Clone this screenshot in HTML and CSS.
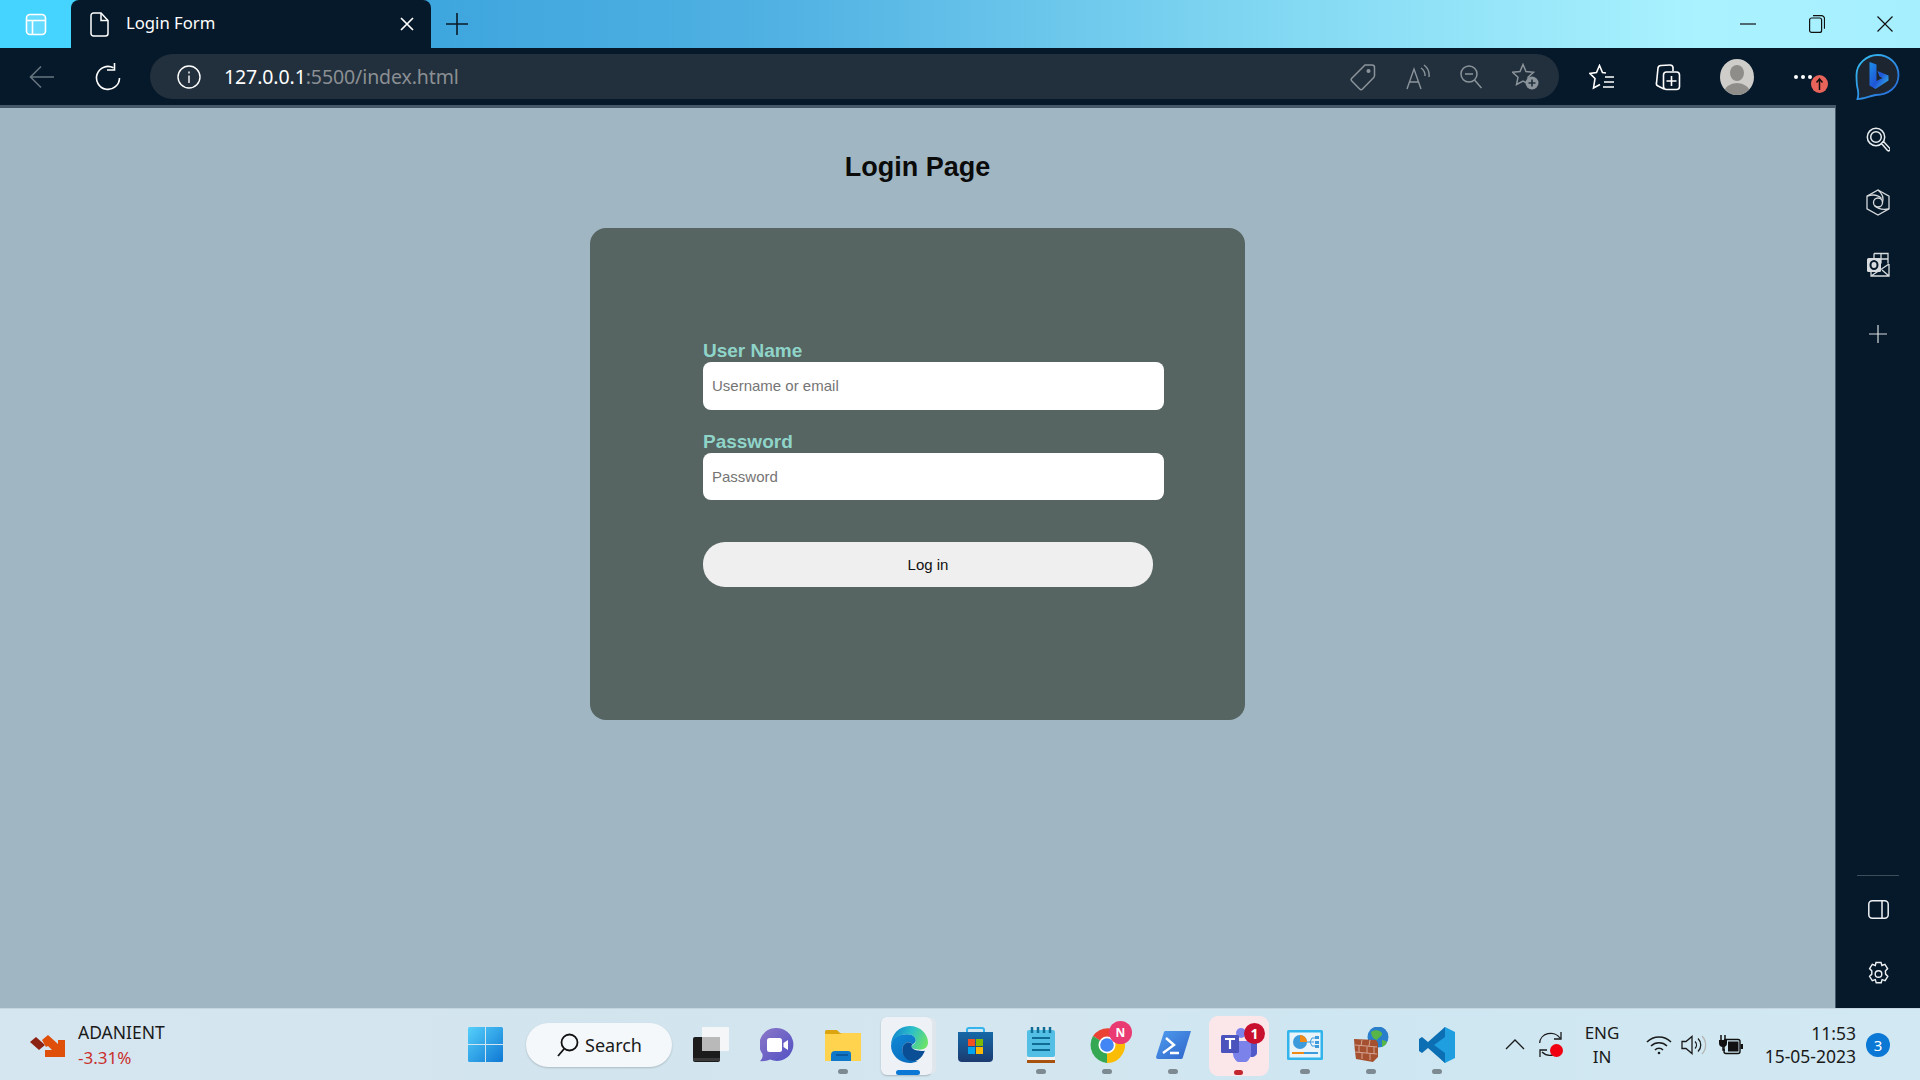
FILE: index.html
```html
<!DOCTYPE html>
<html lang="en">
<head>
<meta charset="utf-8">
<title>Login Form</title>
<link rel="stylesheet" href="styles.css">
</head>
<body>
<div class="screen">
  <header class="titlebar">
    <div class="tabstrip-btn">
      <svg width="22" height="23" viewBox="0 0 22 23" fill="none" stroke="#fff" stroke-width="1.6"><rect x="1.5" y="1.5" width="19" height="20" rx="3.5" fill="#ffffff" fill-opacity=".18"/><path d="M1.5 7.5h19M7.5 7.5v14"/></svg>
    </div>
    <div class="tab">
      <svg class="tab-page" width="19" height="25" viewBox="0 0 19 25" fill="none" stroke="#fff" stroke-width="1.5"><path d="M3.5 1h7.5l7 7.5v13a2.500 2.500 0 0 1-2.500 2.500h-12a2.500 2.500 0 0 1-2.500-2.500v-18a2.500 2.500 0 0 1 2.500-2.500z"/><path d="M11 1v7.500h7"/></svg>
      <span class="tab-title">Login Form</span>
      <svg class="tab-close" width="14" height="14" viewBox="0 0 14 14" stroke="#fff" stroke-width="1.7"><path d="M1 1l12 12M13 1L1 13"/></svg>
    </div>
    <svg class="newtab" width="22" height="22" viewBox="0 0 22 22" stroke="#0a1a26" stroke-width="1.6"><path d="M11 0v22M0 11h22"/></svg>
    <div class="winctl">
      <svg width="16" height="16" viewBox="0 0 16 16" stroke="#111" stroke-width="1.2"><path d="M0 8h16"/></svg>
      <svg width="16" height="18" viewBox="0 0 16 18" fill="none" stroke="#111" stroke-width="1.2"><rect x=".6" y="3" width="12" height="14.400" rx="2"/><path d="M4 .7h8.500a3 3 0 0 1 3 3v10"/></svg>
      <svg width="16" height="16" viewBox="0 0 16 16" stroke="#111" stroke-width="1.2"><path d="M.5.500l15 15M15.500.500l-15 15"/></svg>
    </div>
  </header>

  <nav class="toolbar">
    <svg class="nav-back" width="26" height="24" viewBox="0 0 26 24" fill="none" stroke="#66747f" stroke-width="1.6"><path d="M25 12H1.500M12 1.500L1.500 12 12 22.500"/></svg>
    <svg class="nav-reload" width="26" height="28" viewBox="0 0 26 28" fill="none" stroke="#fff" stroke-width="1.6"><path d="M18.500 4.800A11.500 11.500 0 1 0 24.500 15"/><path d="M19.500 0v7h-7.500"/></svg>
    <div class="urlbar">
      <svg class="url-info" width="24" height="24" viewBox="0 0 24 24" fill="none" stroke="#fff" stroke-width="1.4"><circle cx="12" cy="12" r="11"/><path d="M12 10.500v7.500M12 6.500v2"/></svg>
      <div class="url-text"><span class="url-host">127.0.0.1</span><span class="url-rest">:5500/index.html</span></div>
      <div class="url-actions">
        <svg width="26" height="28" viewBox="0 0 26 28" fill="none" stroke="#8b949b" stroke-width="1.5"><path d="M15 2h7a2.500 2.500 0 0 1 2.500 2.500v8a3 3 0 0 1-1 2.200L12.500 26a2 2 0 0 1-2.800 0L1.800 18a2 2 0 0 1 0-2.800z"/><circle cx="18.500" cy="8" r="1.300" fill="#8b949b"/></svg>
        <svg width="24" height="26" viewBox="0 0 24 26" fill="none" stroke="#8b949b" stroke-width="1.4"><path d="M1 25L8 5l7 20M3.500 18h9M15 4a9 9 0 0 1 4 8M18 1a13 13 0 0 1 5 12"/></svg>
        <svg width="22" height="24" viewBox="0 0 22 24" fill="none" stroke="#8b949b" stroke-width="1.5"><circle cx="9" cy="9" r="8"/><path d="M5 9h8M14.500 15l7 8"/></svg>
        <svg width="27" height="27" viewBox="0 0 27 27" fill="none" stroke="#8b949b" stroke-width="1.5"><path d="M11 1.500L14 8.500 21.500 9.300 16 14.300 17.500 21.500 11 18 4.500 21.500 6 14.300 .5 9.300 8 8.500Z"/><circle cx="20" cy="20" r="6.500" fill="#8b949b" stroke="none"/><path d="M20 16.500v7M16.500 20h7" stroke="#22303d" stroke-width="1.600"/></svg>
      </div>
    </div>
    <svg class="tb-fav" width="26" height="26" viewBox="0 0 26 26" fill="none" stroke="#fff" stroke-width="1.600"><path d="M17 9L13.500 8.500 10.500 1.500 7.500 8.500 1 9.500 6 14.500 4.500 24 11 20.500"/><path d="M16 13h9M15 18h10M14 23h11"/></svg>
    <svg class="tb-coll" width="26" height="28" viewBox="0 0 26 28" fill="none" stroke="#fff" stroke-width="1.600"><path d="M9 26L3 23a2.500 2.500 0 0 1-1.500-3L3 5a3 3 0 0 1 3-2.500L15 2a3 3 0 0 1 3 2.500V8"/><rect x="8.500" y="9" width="16" height="17.500" rx="3" fill="#06192a"/><path d="M16.500 13v10M11.500 18h10"/></svg>
    <svg class="tb-user" width="34" height="36" viewBox="0 0 34 36"><defs><clipPath id="uc"><ellipse cx="17" cy="18" rx="17" ry="18"/></clipPath></defs><ellipse cx="17" cy="18" rx="17" ry="18" fill="#cfcdc9"/><g clip-path="url(#uc)" fill="#8f8d8a"><ellipse cx="17" cy="14" rx="7" ry="8"/><ellipse cx="17" cy="34" rx="13" ry="10"/></g></svg>
    <div class="tb-more">
      <svg width="20" height="6" viewBox="0 0 20 6" fill="#fff"><circle cx="3" cy="3" r="2"/><circle cx="10" cy="3" r="2"/><circle cx="17" cy="3" r="2"/></svg>
      <svg class="tb-more-badge" width="17" height="18" viewBox="0 0 17 18"><ellipse cx="8.500" cy="9" rx="8.500" ry="9" fill="#e8635a"/><path d="M8.500 15V4.500M5.500 7.500l3-3.500 3 3.500" stroke="#111" stroke-width="1.500" fill="none"/></svg>
    </div>
    <svg class="tb-bing" width="45" height="46" viewBox="0 0 44 46"><defs><linearGradient id="bb" x1="0" y1="0" x2="1" y2="1"><stop offset="0" stop-color="#36c1f2"/><stop offset="1" stop-color="#2563d8"/></linearGradient><linearGradient id="bf" x1="0" y1="0" x2="1" y2="1"><stop offset="0" stop-color="#1d8fe8"/><stop offset=".55" stop-color="#1f55d6"/><stop offset="1" stop-color="#37c2e8"/></linearGradient></defs><path d="M22 1C33 1 43 9 43 21C43 33 33 41 20 41C14 42 8 45 2 45C3 42 3 38 2 34C1 30 1 26 1 21C1 10 11 1 22 1Z" fill="#1c2530" stroke="url(#bb)" stroke-width="1.800"/><path d="M14 8l7 2.500V27l6-3-3-1.500-2-5.500 11 4.500v5L20 35l-6-3.500z" fill="url(#bf)"/></svg>
  </nav>

  <div class="body-row">
    <main class="page">
      <h1 class="page-title">Login Page</h1>
      <form class="card">
        <label class="field-label" for="user">User Name</label>
        <input class="field field-user" id="user" type="text" placeholder="Username or email">
        <label class="field-label field-label-pw" for="pw">Password</label>
        <input class="field field-pw" id="pw" type="password" placeholder="Password">
        <button class="login" type="button">Log in</button>
      </form>
    </main>
    <aside class="sidebar">
      <div class="side-top">
        <svg width="24" height="26" viewBox="0 0 24 26" fill="none" stroke="#e8ecef" stroke-width="1.500"><circle cx="10" cy="10" r="8.700"/><circle cx="10" cy="10" r="5.300"/><path d="M15.500 16.500l2-2 6 6.500a1.400 1.400 0 0 1-2 2.500z" fill="#06192a"/></svg>
        <svg width="24" height="27" viewBox="0 0 24 27" fill="none" stroke="#d5d9dc" stroke-width="1.300"><path d="M12 1l11 6.200v12.600L12 26 1 19.800V7.200z"/><path d="M12 1C17 5 17.500 10 16.500 13.500M23 19.800C17 21 12 20 8.500 16.500M1 7.200C7 5 12 6 15.500 9.500"/><circle cx="12" cy="13.500" r="4.500"/></svg>
        <svg width="24" height="25" viewBox="0 0 24 25"><path d="M8 1.500h14v10M8 1.500v5M15 1.500v10M8 7h14" fill="none" stroke="#d9dcde" stroke-width="1.300"/><rect x="1" y="6" width="14" height="14" rx="1.500" fill="#d9dcde"/><ellipse cx="8" cy="13" rx="3.500" ry="4" fill="none" stroke="#06192a" stroke-width="2"/><path d="M5 20v4h18V12M5 24l9-6M23 24l-7-6M14 18l9-6" fill="none" stroke="#d9dcde" stroke-width="1.300"/></svg>
        <svg class="side-plus" width="18" height="18" viewBox="0 0 18 18" stroke="#d9dcde" stroke-width="1.200"><path d="M9 0v18M0 9h18"/></svg>
      </div>
      <div class="side-bottom">
        <div class="side-sep"></div>
        <svg width="21" height="19" viewBox="0 0 21 19" fill="none" stroke="#eef1f3" stroke-width="1.500"><rect x=".8" y=".8" width="19.400" height="17.400" rx="3.500"/><path d="M14 .8v17.400"/></svg>
        <svg width="25" height="26" viewBox="0 0 25 26" fill="none" stroke="#eef1f3" stroke-width="1.400"><path d="M10 1.500h5l.9 3 3-1.100 2.700 4.200-2.200 2.300.2 3.200 2.200 2.300-2.700 4.200-3-1-.9 3.100h-5l-.9-3.100-3 1-2.700-4.200 2.200-2.300-.0-3.200-2.200-2.300 2.700-4.200 3 1.100z"/><circle cx="12.500" cy="13" r="3.300"/></svg>
      </div>
    </aside>
  </div>

  <footer class="taskbar">
    <div class="widget">
      <svg width="36" height="24" viewBox="0 0 36 24"><path d="M0 9l6-5 9 8-6 5z" fill="#8c2214"/><path d="M12 7l6-5 10 9V7l7 0v17H15l0-7h7l-4-4-2 1z" fill="#df4f0a"/></svg>
      <div class="widget-text"><div class="widget-name">ADANIENT</div><div class="widget-val">-3.31%</div></div>
    </div>
    <div class="start">
      <svg width="35" height="35" viewBox="0 0 35 35"><defs><linearGradient id="w1" x1="0" y1="0" x2="1" y2="1"><stop offset="0" stop-color="#55d0fb"/><stop offset="1" stop-color="#0f78d4"/></linearGradient></defs><path d="M1.500 0H17v17H0V1.500A1.500 1.500 0 0 1 1.500 0zM18 0h15.500A1.500 1.500 0 0 1 35 1.500V17H18zM0 18h17v17H1.500A1.500 1.500 0 0 1 0 33.500zM18 18h17v15.500a1.500 1.500 0 0 1-1.500 1.500H18z" fill="url(#w1)"/></svg>
    </div>
    <div class="search">
      <svg width="22" height="24" viewBox="0 0 22 24" fill="none" stroke="#111" stroke-width="1.800"><circle cx="12.500" cy="9.500" r="8"/><path d="M7 16L1 23"/></svg>
      <span>Search</span>
    </div>
    <div class="apps">
      <div class="app">
        <svg width="36" height="35" viewBox="0 0 36 35"><rect x="0" y="10" width="27" height="25" rx="2" fill="#1c1c1c"/><rect x="0" y="31" width="27" height="3" fill="#3a3a3a"/><rect x="9" y="0" width="27" height="24" rx="1" fill="#f7f7f7" fill-opacity=".9"/><rect x="9" y="10" width="18" height="14" fill="#b9b9b9"/></svg>
      </div>
      <div class="app">
        <svg width="34" height="35" viewBox="0 0 34 35"><defs><linearGradient id="tc" x1="0" y1="0" x2="1" y2="1"><stop offset="0" stop-color="#8c78c8"/><stop offset="1" stop-color="#5150c4"/></linearGradient></defs><path d="M17 1a16.500 16.500 0 1 1-7 31.500C7 34 3 34.500 0 34c2-2 3-4 2.500-7A16.500 16.500 0 0 1 17 1z" fill="url(#tc)"/><rect x="7" y="11" width="15" height="14" rx="2.500" fill="#fff"/><path d="M23.500 16l4.500-3v10l-4.500-3z" fill="#fff"/></svg>
      </div>
      <div class="app app-dot">
        <svg width="36" height="32" viewBox="0 0 36 32"><path d="M0 2.500A1.500 1.500 0 0 1 1.500 1H12l3 3h21v28H0z" fill="#dca510"/><path d="M0 5h15l2-1h19v28H0z" fill="#ffd34e"/><path d="M6 31V26a4 4 0 0 1 4-4h13a3 3 0 0 1 3 3v7H6z" fill="#1078c8"/><path d="M11 26h12" stroke="#0a4f8e" stroke-width="1.500"/></svg>
      </div>
      <div class="app app-edge">
        <div class="edge-tile"></div>
        <svg class="edge-svg" width="37" height="37" viewBox="0 0 36 36"><defs><linearGradient id="eg" x1="0" y1=".3" x2="1" y2=".6"><stop offset="0" stop-color="#0f83cf"/><stop offset=".5" stop-color="#2cc0c8"/><stop offset="1" stop-color="#6be26a"/></linearGradient><linearGradient id="eb" x1="0" y1="0" x2=".6" y2="1"><stop offset="0" stop-color="#1089d6"/><stop offset="1" stop-color="#0a6ebf"/></linearGradient></defs><path d="M18 0C29 0 36 8 36 16C36 21 32 23 28 23C24 23 20 22 20 20C20 18 24 18 24 14C24 10 20 8 15 8C8 8 1 14 0 19C0 8 8 0 18 0Z" fill="url(#eg)"/><path d="M0 19C1 12 8 8 15 8C20 8 24 10 24 14C24 16 22 17 21 18C18 14 12 16 11 22C10 29 17 35 26 34C23 35.500 21 36 18 36C8 36 0 28 0 19Z" fill="url(#eb)"/><path d="M11 22C12 16 18 14 21 18C20 19 20 19 20 20C20 23 27 25 33 24C30 31 26 34 22 34C16 35 10 29 11 22Z" fill="#0a4f95"/></svg>
        <span class="ind ind-edge"></span>
      </div>
      <div class="app">
        <svg width="35" height="35" viewBox="0 0 35 35"><defs><linearGradient id="st" x1="0" y1="0" x2="0" y2="1"><stop offset="0" stop-color="#1669a8"/><stop offset="1" stop-color="#1b3b70"/></linearGradient></defs><path d="M9 9V3a2 2 0 0 1 2-2h13a2 2 0 0 1 2 2v6" fill="none" stroke="#34b4ec" stroke-width="2"/><path d="M0 5h35v26a4 4 0 0 1-4 4H4a4 4 0 0 1-4-4z" fill="url(#st)"/><rect x="10" y="12" width="7" height="7" fill="#f25022"/><rect x="18" y="12" width="7" height="7" fill="#7fba00"/><rect x="10" y="20" width="7" height="7" fill="#00a4ef"/><rect x="18" y="20" width="7" height="7" fill="#ffb900"/></svg>
      </div>
      <div class="app app-dot">
        <svg width="28" height="36" viewBox="0 0 28 36"><rect x="0" y="3" width="28" height="27" rx="2" fill="#54bfe4"/><rect x="0" y="30" width="28" height="3" fill="#f2f2f2"/><rect x="0" y="33" width="28" height="3" fill="#a8520f"/><path d="M5 0v6M11 0v6M17 0v6M23 0v6" stroke="#0f6c94" stroke-width="2.500"/><path d="M5 11h18M5 17h18M5 23h18" stroke="#0f6c94" stroke-width="2"/></svg>
      </div>
      <div class="app app-dot">
        <svg width="36" height="36" viewBox="0 0 36 36"><path d="M18 18L4 9A18 18 0 0 1 33.600 9z" fill="#ea4335"/><path d="M18 18L33.600 9A18 18 0 0 1 18 36z" fill="#fbbc04"/><path d="M18 18L18 36A18 18 0 0 1 4 9z" fill="#34a853"/><circle cx="18" cy="18" r="8.500" fill="#fff"/><circle cx="18" cy="18" r="6.800" fill="#4285f4"/></svg>
        <span class="badge badge-n">N</span>
      </div>
      <div class="app app-dot">
        <svg width="35" height="28" viewBox="0 0 35 28"><defs><linearGradient id="ps" x1="0" y1="0" x2="1" y2="1"><stop offset="0" stop-color="#4f9cef"/><stop offset="1" stop-color="#2f65c9"/></linearGradient></defs><path d="M8 1a2 2 0 0 1 2-1h25l-8 26a2 2 0 0 1-2 2H2a2 2 0 0 1-2-2z" fill="url(#ps)"/><path d="M10 7l8 7-11 8M14 22h9" fill="none" stroke="#fff" stroke-width="2.400"/></svg>
      </div>
      <div class="app app-teams">
        <div class="teams-tile"></div>
        <svg class="teams-svg" width="36" height="34" viewBox="0 0 36 34"><circle cx="20" cy="5" r="5" fill="#7b83eb"/><circle cx="31" cy="9" r="4" fill="#5059c9"/><path d="M26 14h10v11a5 5 0 0 1-8 3z" fill="#5059c9"/><path d="M8 13h22v13a9 9 0 0 1-18 0z" fill="#7b83eb"/><rect x="0" y="7" width="18" height="18" rx="1.500" fill="#4b53bc"/><path d="M4 11h10M9 11v10" stroke="#fff" stroke-width="2.200"/></svg>
        <span class="badge badge-one">1</span>
        <span class="ind ind-teams"></span>
      </div>
      <div class="app app-dot">
        <svg width="36" height="30" viewBox="0 0 36 30"><rect width="36" height="30" rx="1.500" fill="#31b4ec"/><rect x="2.500" y="2.500" width="31" height="25" fill="#e8f4fa"/><circle cx="13" cy="12" r="7" fill="#3d9bdc"/><path d="M13 12V5a7 7 0 0 1 7 7z" fill="#ef8a17"/><path d="M20 12h3l2-4h3M23 12h4M23 12l2 4h3" fill="none" stroke="#3d9bdc"/><rect x="28" y="6" width="4" height="3" fill="#3d9bdc"/><rect x="28" y="11" width="4" height="3" fill="#3d9bdc"/><rect x="28" y="15" width="4" height="3" fill="#3d9bdc"/><path d="M5 23h12" stroke="#ef8a17" stroke-width="2"/><path d="M17 23h14" stroke="#3d9bdc" stroke-width="2"/></svg>
      </div>
      <div class="app app-dot">
        <svg width="35" height="35" viewBox="0 0 35 35"><circle cx="24" cy="10" r="10.500" fill="#2a7fcb"/><path d="M17 5c4-3 9-2 11 1 1 3-3 4-5 7-2-1-5-1-6-8zM28 13c2 0 4 1 5 2-1 3-3 4-5 5z" fill="#58b648"/><path d="M0 12l22 1 2 3v14l-5 5L2 32l-1-7z" fill="#a5502f"/><path d="M1 18l22 2M1 25l22 2M8 13l-1 6M16 13l-1 6M5 19v6M13 20v6M20 20v7M8 26v6M16 27v6" stroke="#d5a595" stroke-width="1"/></svg>
      </div>
      <div class="app app-dot">
        <svg width="36" height="36" viewBox="0 0 36 36"><path d="M26 0L36 5v26l-10 5L10 20z" fill="#1f9ee0"/><path d="M26 0L9 15 3 10 0 12v12l3 2 6-5 17 15 0-10-11-8 11-8z" fill="#0c6fb3"/></svg>
      </div>
    </div>
    <div class="tray">
      <svg class="t-chev" width="20" height="11" viewBox="0 0 20 11" fill="none" stroke="#1a1a1a" stroke-width="1.300"><path d="M1 10l9-9 9 9"/></svg>
      <div class="t-sync">
        <svg width="24" height="26" viewBox="0 0 24 26" fill="none" stroke="#1a1a1a" stroke-width="1.300"><path d="M0.700 11A11 10 0 0 1 21 6M22 0v7h-7M22 15A11 10 0 0 1 3 20M1 25v-7h7"/></svg>
        <span class="t-rec"></span>
      </div>
      <div class="t-lang"><div>ENG</div><div>IN</div></div>
      <svg class="t-wifi" width="26" height="20" viewBox="0 0 26 20" fill="none" stroke="#1a1a1a" stroke-width="1.600"><path d="M1 7a17 17 0 0 1 24 0M5 11a11.500 11.500 0 0 1 16 0M9 15a5.500 5.500 0 0 1 8 0"/><circle cx="13" cy="18" r="1.300" fill="#1a1a1a" stroke="none"/></svg>
      <svg class="t-vol" width="26" height="20" viewBox="0 0 26 20" fill="none" stroke="#1a1a1a" stroke-width="1.300"><path d="M1 6.500h4L11 1.500v17L5 13.500H1z"/><path d="M14 6.500a5 5 0 0 1 0 7M17 3.500a9 9 0 0 1 0 13"/><path d="M21 1a13 13 0 0 1 0 18" stroke="#b5b5b5"/></svg>
      <svg class="t-bat" width="25" height="20" viewBox="0 0 25 20"><path d="M3 0v5M7 0v5" stroke="#111" stroke-width="1.500"/><path d="M1 5h8v3a4 4 0 0 1-8 0z" fill="#111"/><path d="M5 11v4h2" fill="none" stroke="#111" stroke-width="1.500"/><rect x="6" y="4.500" width="16" height="14" rx="2" fill="none" stroke="#111" stroke-width="1.400"/><rect x="10" y="6.500" width="10.500" height="10" fill="#111"/><rect x="22.500" y="9" width="2.500" height="5" fill="#111"/></svg>
      <div class="t-clock"><div>11:53</div><div>15-05-2023</div></div>
      <span class="t-notif">3</span>
    </div>
  </footer>
</div>
</body>
</html>
```

FILE: styles.css
```css
* { box-sizing: border-box; }
html, body { margin: 0; padding: 0; }
body { width: 1920px; height: 1080px; overflow: hidden; font-family: "Liberation Sans", Arial, sans-serif; }
.screen { width: 1920px; height: 1080px; display: flex; flex-direction: column; }
svg { display: block; flex: none; }

/* title bar */
.titlebar { height: 48px; flex: none; display: flex; align-items: center; background: linear-gradient(90deg, #45d4ff 0, #45d4ff 70px, #3ea6de 431px, #4fb0e2 760px, #84daf3 1300px, #aaf2ff 1700px, #a6efff 1920px); }
.tabstrip-btn { width: 71px; flex: none; display: flex; justify-content: center; }
.tab { width: 360px; height: 48px; flex: none; background: #06192a; border-radius: 8px 8px 0 0; display: flex; align-items: center; color: #fff; padding-left: 19px; }
.tab-title { font-family: "Noto Sans", sans-serif; font-size: 16.700px; line-height: 22px; margin: 0 0 2px 17px; flex: 1; }
.tab-close { margin-right: 17px; }
.newtab { margin-left: 15px; }
.winctl { margin-left: auto; display: flex; align-items: center; width: 153px; margin-right: 27px; justify-content: space-between; }

/* toolbar */
.toolbar { height: 57px; flex: none; background: #06192a; display: flex; align-items: center; }
.nav-back { margin-left: 29px; }
.nav-reload { margin-left: 40px; }
.urlbar { width: 1409px; height: 45px; margin-left: 29px; background: #22303d; border-radius: 23px; display: flex; align-items: center; padding-left: 27px; flex: none; }
.url-text { font-family: "Noto Sans", sans-serif; font-size: 19.500px; margin-left: 23px; letter-spacing: -.1px; }
.url-host { color: #fff; }
.url-rest { color: #8b8f93; }
.url-actions { margin-left: auto; margin-right: 20px; display: flex; align-items: center; gap: 30px; }
.tb-fav { margin-left: 30px; }
.tb-coll { margin-left: 40px; }
.tb-user { margin-left: 39px; }
.tb-more { margin-left: 39px; width: 34px; height: 30px; position: relative; display: flex; align-items: center; }
.tb-more-badge { position: absolute; left: 18px; top: 13px; }
.tb-bing { margin-left: 28px; }

/* content */
.body-row { flex: 1; display: flex; min-height: 0; }
.page { flex: 1; background: #a0b6c2; border-top: 3px solid #44586a; border-right: 1px solid #44586a; display: flex; flex-direction: column; align-items: center; }
.page-title { margin: 44px 0 0; font-size: 27px; line-height: 31px; color: #0b0b0b; font-weight: 700; }
.card { margin-top: 45px; width: 655px; height: 492px; background: #566462; border-radius: 16px; padding: 112px 0 0 113px; display: flex; flex-direction: column; align-items: flex-start; }
.field-label { font-size: 19px; line-height: 22px; font-weight: 700; color: #8fd4c8; display: block; }
.field-label-pw { margin-top: 21px; }
.field { width: 461px; border: 0; background: #fff; border-radius: 8px; padding: 0 9px; font-family: "Liberation Sans", sans-serif; font-size: 15px; display: block; outline: 0; }
.field-user { height: 48px; padding-bottom: 2px; }
.field-pw { height: 47px; }
.field::placeholder { color: #757575; opacity: 1; }
.login { width: 450px; height: 45px; margin-top: 42px; border: 0; border-radius: 22px; background: #efefef; color: #111; font-family: "Liberation Sans", sans-serif; font-size: 15px; padding: 0; }

/* sidebar */
.sidebar { width: 84px; flex: none; background: #06192a; display: flex; flex-direction: column; justify-content: space-between; align-items: center; padding: 22px 0 21px; }
.side-top { display: flex; flex-direction: column; align-items: center; gap: 36px; }
.side-plus { margin-top: 12px; }
.side-bottom { display: flex; flex-direction: column; align-items: center; }
.side-sep { width: 42px; height: 1px; background: #3c4d5c; margin-bottom: 24px; }
.side-bottom svg:last-child { margin-top: 42px; }

/* taskbar */
.taskbar { height: 72px; flex: none; display: flex; align-items: center; background: linear-gradient(90deg, #d6e6f0 0, #d2e4ee 600px, #d4e6ef 1000px, #cee6f1 1300px, #d2e9f3 1920px); border-top: 1px solid #c4d6df; color: #1a1a1a; font-family: "Noto Sans", sans-serif; }
.widget { width: 452px; flex: none; display: flex; align-items: center; padding-left: 30px; gap: 12px; height: 100%; }
.widget-text { font-size: 17px; line-height: 25px; }
.widget-name { font-size: 17.500px; }
.widget-val { color: #c9302c; }
.start { width: 66px; display: flex; justify-content: center; flex: none; }
.search { width: 146px; height: 44px; margin: 0 6px 0 8px; flex: none; background: #f4f8fb; border-radius: 22px; box-shadow: 0 1px 2px rgba(0,0,0,.18); display: flex; align-items: center; padding-left: 31px; gap: 6px; font-size: 18px; }
.apps { display: flex; flex: none; height: 100%; }
.app { width: 66px; height: 100%; position: relative; display: flex; align-items: center; justify-content: center; }
.app-dot::after { content: ""; position: absolute; bottom: 6px; left: 28px; width: 10px; height: 5px; border-radius: 3px; background: #7d8a91; }
.edge-tile { position: absolute; left: 5px; top: 8px; width: 51px; height: 58px; border-radius: 6px; background: #eef2f7; box-shadow: 5px 0 0 -1px #dfe6ec, 0 1px 2px rgba(0,0,0,.2); }
.edge-svg, .teams-svg { position: relative; }
.ind { position: absolute; bottom: 5px; height: 5px; border-radius: 3px; }
.ind-edge { left: 20px; width: 24px; background: #0a78d4; }
.teams-tile { position: absolute; left: 3px; top: 7px; width: 60px; height: 60px; border-radius: 9px; background: #fbe7ea; }
.ind-teams { left: 28px; width: 9px; background: #c4262e; }
.badge { position: absolute; border-radius: 50%; color: #fff; display: flex; align-items: center; justify-content: center; font-weight: 700; font-family: "Noto Sans", sans-serif; }
.badge-n { left: 35px; top: 12px; width: 23px; height: 23px; background: #ea3a72; font-size: 12px; }
.badge-one { left: 38px; top: 14px; width: 21px; height: 21px; background: #c8102e; font-size: 14px; }

/* tray */
.tray { flex: 1; height: 100%; display: flex; align-items: center; position: relative; font-size: 17px; }
.t-chev { margin-left: 35px; }
.t-sync { position: relative; margin-left: 14px; width: 28px; }
.t-rec { position: absolute; left: 11px; top: 12px; width: 13px; height: 13px; border-radius: 50%; background: #f00010; }
.t-lang { width: 50px; margin-left: 10px; text-align: center; line-height: 24px; }
.t-wifi { margin-left: 19px; }
.t-vol { margin-left: 9px; }
.t-bat { margin-left: 11px; }
.t-clock { width: 105px; margin-left: 8px; text-align: right; line-height: 23px; font-size: 17.500px; }
.t-notif { width: 24px; height: 24px; margin-left: 10px; border-radius: 50%; background: #0a78d4; color: #fff; display: flex; align-items: center; justify-content: center; font-size: 15px; }
```
